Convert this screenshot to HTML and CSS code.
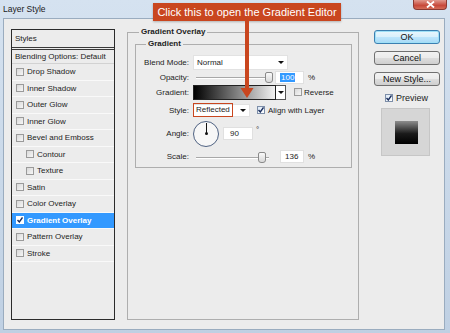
FILE: index.html
```html
<!DOCTYPE html>
<html lang="en">
<head>
    <meta charset="UTF-8">
    <meta name="viewport" content="width=device-width, initial-scale=1.0">
    <title>Layer Style</title>
    <link rel="stylesheet" href="styles.css">
</head>
<body>
    <div class="window">
        <div class="titlebar">
            <span class="title">Layer Style</span>
            <span class="close">
                <svg width="9" height="7" viewBox="0 0 9 7"><path d="M1 0.5 L8 6.5 M8 0.5 L1 6.5" stroke="#fff" stroke-width="1.8"/></svg>
            </span>
        </div>
        <div class="client">
            <div class="styles-panel">
                <div class="panel-head">Styles</div>
                <div class="panel-row blend">Blending Options: Default</div>
                <div class="panel-row"><span class="cb"></span>Drop Shadow</div>
                <div class="panel-row"><span class="cb"></span>Inner Shadow</div>
                <div class="panel-row"><span class="cb"></span>Outer Glow</div>
                <div class="panel-row"><span class="cb"></span>Inner Glow</div>
                <div class="panel-row"><span class="cb"></span>Bevel and Emboss</div>
                <div class="panel-row sub"><span class="cb"></span>Contour</div>
                <div class="panel-row sub"><span class="cb"></span>Texture</div>
                <div class="panel-row"><span class="cb"></span>Satin</div>
                <div class="panel-row"><span class="cb"></span>Color Overlay</div>
                <div class="panel-row selected"><span class="cb checked"><svg width="6" height="6" viewBox="0 0 6 6"><path d="M0.5 3 L2.3 5 L5.5 0.5" fill="none" stroke="#1b2f5e" stroke-width="1.4"/></svg></span>Gradient Overlay</div>
                <div class="panel-row"><span class="cb"></span>Pattern Overlay</div>
                <div class="panel-row"><span class="cb"></span>Stroke</div>
            </div>

            <fieldset class="group outer">
                <legend>Gradient Overlay</legend>
                <fieldset class="group inner">
                    <legend>Gradient</legend>
                    <div class="props">
                        <label>Blend Mode:</label>
                        <div class="ctl">
                            <div class="select wide"><span>Normal</span><span class="arrow"></span></div>
                        </div>

                        <label>Opacity:</label>
                        <div class="ctl">
                            <div class="slider"><span class="track"></span><span class="thumb" style="left: 70px"></span></div>
                            <div class="field opacity"><span class="sel">100</span></div>
                            <span class="unit">%</span>
                        </div>

                        <label>Gradient:</label>
                        <div class="ctl">
                            <div class="gradient-bar"></div>
                            <div class="gradient-drop"><span class="arrow"></span></div>
                            <span class="cb reverse"></span><span class="cb-text">Reverse</span>
                        </div>

                        <label>Style:</label>
                        <div class="ctl">
                            <div class="select narrow"><span class="marked">Reflected</span><span class="arrow"></span></div>
                            <span class="cb checked align"><svg width="6" height="6" viewBox="0 0 6 6"><path d="M0.5 3 L2.3 5 L5.5 0.5" fill="none" stroke="#1b2f5e" stroke-width="1.4"/></svg></span><span class="cb-text">Align with Layer</span>
                        </div>

                        <label>Angle:</label>
                        <div class="ctl">
                            <div class="dial"><span class="needle"></span><span class="hub"></span></div>
                            <div class="field angle">90</div>
                            <span class="deg">°</span>
                        </div>

                        <label>Scale:</label>
                        <div class="ctl">
                            <div class="slider"><span class="track"></span><span class="thumb" style="left: 63px"></span></div>
                            <div class="field scale">136</div>
                            <span class="unit">%</span>
                        </div>
                    </div>
                </fieldset>
            </fieldset>

            <div class="side">
                <button class="btn default">OK</button>
                <button class="btn">Cancel</button>
                <button class="btn">New Style...</button>
                <div class="preview-check">
                    <span class="cb checked"><svg width="6" height="6" viewBox="0 0 6 6"><path d="M0.5 3 L2.3 5 L5.5 0.5" fill="none" stroke="#1b2f5e" stroke-width="1.4"/></svg></span><span>Preview</span>
                </div>
                <div class="preview-box"><div class="swatch"></div></div>
            </div>
        </div>

        <div class="callout">Click this to open the Gradient Editor</div>
        <svg class="callout-arrow" width="16" height="80" viewBox="0 0 16 80">
            <rect x="6" y="0" width="4" height="70" fill="#c9461f"/>
            <path d="M1.5 68 L14.5 68 L8 78 Z" fill="#c9461f"/>
        </svg>
    </div>
</body>
</html>
```

FILE: styles.css
```css
body {
    margin: 0;
    background: #c3d3e5;
    font-family: "Liberation Sans", Arial, sans-serif;
    font-size: 8px;
    color: #1c1c1c;
}
.window {
    position: relative;
    width: 450px;
    height: 333px;
    box-sizing: border-box;
    padding: 0 5px 3px 3px;
    display: flex;
    flex-direction: column;
    background: linear-gradient(#d5e2f0, #bfd0e3);
}
.titlebar {
    height: 18px;
    margin: 0 -5px 0 -3px;
    padding: 0 3px;
    display: flex;
    justify-content: space-between;
    align-items: flex-start;
}
.title {
    font-size: 8.5px;
    line-height: 18px;
    color: #1a1a1a;
}
.close {
    width: 34px;
    height: 10px;
    display: flex;
    align-items: center;
    justify-content: center;
    background: linear-gradient(#e19a8e, #c7493a 60%, #d46d58);
    border: 1px solid #8c3a32;
    border-top: none;
    border-radius: 0 0 4px 4px;
    box-sizing: border-box;
}
.client {
    flex: 1;
    display: flex;
    align-items: flex-start;
    padding: 7px 0 0 7px;
    background: #ececec;
    border: 1px solid #9aacbf;
}

/* liste des styles */
.styles-panel {
    margin-top: 3px;
    width: 104px;
    height: 291px;
    box-sizing: border-box;
    border: 1px solid #2b2b2b;
    background: #ececec;
}
.panel-head {
    height: 17px;
    line-height: 17px;
    padding-left: 3px;
    border-bottom: 3px double #3a3a3a;
}
.panel-row {
    height: 16.5px;
    box-sizing: border-box;
    display: flex;
    align-items: center;
    padding-left: 4px;
    border-bottom: 1px solid #f9f9f9;
    white-space: nowrap;
}
.panel-row.blend {
    height: 14px;
    padding-left: 3px;
    border-bottom: 1px solid #d2d2d2;
}
.panel-row.sub {
    padding-left: 14px;
}
.panel-row.selected {
    background: #3399ff;
    color: #fff;
    font-weight: bold;
}
.cb {
    width: 8px;
    height: 8px;
    box-sizing: border-box;
    border: 1px solid #9a9a9a;
    background: linear-gradient(135deg, #d9d9d9, #f6f6f6);
    margin-right: 3px;
    display: inline-flex;
    align-items: center;
    justify-content: center;
    flex: none;
}
.cb.checked {
    background: linear-gradient(135deg, #dbe8f7, #ffffff);
    border-color: #7d8ea8;
}
.selected .cb.checked {
    background: #fff;
    border-color: #fff;
}

/* groupes */
.group {
    margin: 0;
    padding: 0;
    min-width: 0;
    border: 1px solid #aeaeae;
}
.group legend {
    padding: 0 2px;
    font-weight: bold;
    line-height: 12px;
}
.outer {
    margin-left: 12px;
    width: 232px;
    height: 294px;
    box-sizing: border-box;
    padding: 0 6px 0 7px;
}
.outer > legend {
    margin-left: 4px;
}
.inner {
    padding: 4px 0 1px 0;
}
.inner > legend {
    margin-left: 10px;
}
.props {
    display: grid;
    grid-template-columns: 53px auto;
    grid-template-rows: 16px 14px 16px 20px 27px 19px;
    column-gap: 4px;
}
.props label {
    justify-self: end;
    align-self: center;
    white-space: nowrap;
}
.ctl {
    display: flex;
    align-items: center;
    white-space: nowrap;
}
.select {
    height: 15px;
    box-sizing: border-box;
    background: #fff;
    border: 1px solid #e2e2e2;
    display: flex;
    align-items: center;
    justify-content: space-between;
    padding: 0 3px 0 3px;
}
.select.wide {
    width: 95px;
}
.select.narrow {
    width: 57px;
    height: 13px;
    padding-left: 0;
}
.arrow {
    width: 0;
    height: 0;
    border-left: 3px solid transparent;
    border-right: 3px solid transparent;
    border-top: 3px solid #111;
}
.marked {
    border: 1.5px solid #c9461f;
    padding: 1px 2px;
    margin-left: -1px;
    line-height: 10px;
}
.slider {
    position: relative;
    width: 78px;
    height: 12px;
    margin-left: 2px;
}
.track {
    position: absolute;
    left: 1px;
    right: 4px;
    top: 6px;
    height: 1px;
    background: #a8a8a8;
    border-bottom: 1px solid #fff;
}
.thumb {
    position: absolute;
    top: 1px;
    width: 6px;
    height: 9px;
    border: 1px solid #8a8a8a;
    border-radius: 2px 2px 3px 3px;
    background: linear-gradient(#fafafa, #d8d8d8);
}
.field {
    height: 13px;
    box-sizing: border-box;
    background: #fff;
    border: 1px solid #e0e0e0;
    line-height: 11px;
    padding-left: 4px;
}
.field.opacity {
    width: 29px;
    margin-left: 2px;
}
.field.scale {
    width: 24px;
    margin-left: 7px;
}
.field.angle {
    width: 30px;
    margin-left: 4px;
    padding-left: 6px;
}
.sel {
    background: #3399ff;
    color: #fff;
    padding: 0 1px;
}
.unit {
    margin-left: 4px;
}
.deg {
    margin-left: 3px;
    align-self: flex-start;
    margin-top: 5px;
}
.gradient-bar {
    width: 83px;
    height: 15px;
    box-sizing: border-box;
    border: 1px solid #222;
    background: linear-gradient(to right, #000, #f2f2f2);
}
.gradient-drop {
    width: 10px;
    height: 15px;
    box-sizing: border-box;
    background: #fff;
    border: 1px solid #555;
    border-left: none;
    display: flex;
    align-items: center;
    justify-content: center;
}
.cb.reverse {
    margin-left: 8px;
    margin-right: 2px;
}
.cb.align {
    margin-left: 7px;
    margin-right: 3px;
}
.dial {
    position: relative;
    width: 26px;
    height: 26px;
    box-sizing: border-box;
    border: 1.5px solid #4f6282;
    border-radius: 50%;
    background: #f7f7f7;
}
.needle {
    position: absolute;
    left: 11.5px;
    top: 1px;
    width: 1px;
    height: 11px;
    background: #111;
}
.hub {
    position: absolute;
    left: 10.5px;
    top: 10.5px;
    width: 3px;
    height: 3px;
    border-radius: 50%;
    background: #111;
}

/* boutons */
.side {
    margin-left: 15px;
    margin-top: 4px;
    width: 66px;
    display: flex;
    flex-direction: column;
}
.btn {
    height: 14px;
    margin: 0 0 7px;
    padding: 0;
    font-family: "Liberation Sans", Arial, sans-serif;
    font-size: 9px;
    line-height: 12px;
    color: #111;
    border: 1px solid #707070;
    border-radius: 3px;
    background: linear-gradient(#f2f2f2 0%, #ebebeb 50%, #dddddd 51%, #cfcfcf 100%);
}
.btn.default {
    border-color: #3c7fb1;
    background: linear-gradient(#eaf6fd 0%, #d9f0fc 50%, #bee6fd 51%, #a7d9f5 100%);
    box-shadow: inset 0 0 0 1px #9fe0f7;
}
.preview-check {
    display: flex;
    align-items: center;
    margin-top: 0;
    padding-left: 11px;
    height: 9px;
    font-size: 9px;
}
.preview-box {
    margin: 6px 0 0 7px;
    width: 49px;
    height: 48px;
    box-sizing: border-box;
    border: 1px solid #c6c6c6;
    background: #d6d6d6;
    padding: 12px 0 0 13px;
}
.swatch {
    width: 23px;
    height: 23px;
    background: linear-gradient(#8d8d8d, #1a1a1a 55%, #000);
}

/* annotation */
.callout {
    position: absolute;
    left: 153px;
    top: 3px;
    width: 188px;
    height: 18px;
    line-height: 18px;
    text-align: center;
    font-size: 11px;
    color: #fff;
    background: #c9461f;
    box-shadow: 0 1px 2px rgba(0, 0, 0, 0.25);
}
.callout-arrow {
    position: absolute;
    left: 239px;
    top: 20px;
}
```
